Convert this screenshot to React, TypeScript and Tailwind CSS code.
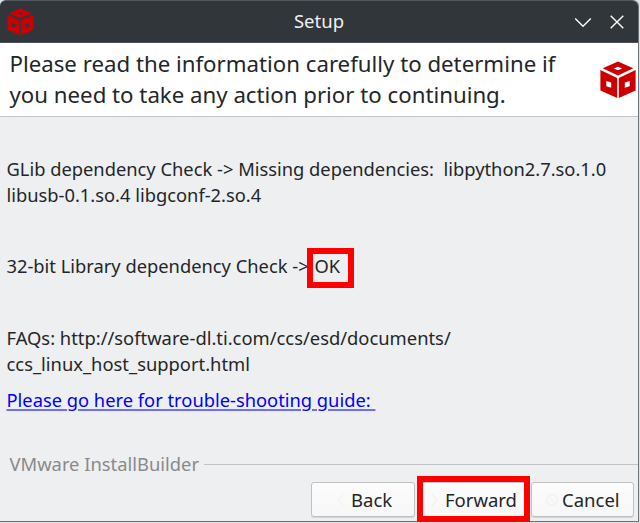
import type { ReactNode } from "react";

function CubeLogo({ className }: { className: string }) {
  return (
    <svg viewBox="0 0 36 38" className={className} fill="#cc0000" fillRule="evenodd">
      <path d="M18 0.5 33.3 7.2 18 14.4 2.7 7.2ZM18 5.7 13.8 7.5 18 9.3 22.2 7.5Z" />
      <path d="M0.4 9 17.2 17V37L0.4 29.6ZM6.3 20V25.2L11.2 26.8V21.6Z" />
      <path d="M35.6 9 18.8 17V37L35.6 29.6ZM29.7 20 24.8 21.6V26.8L29.7 25.2Z" />
    </svg>
  );
}

function TitleBar() {
  return (
    <header className="relative flex h-[43px] shrink-0 items-center justify-between rounded-t-[6px] border-t border-b border-t-[#51585f] border-b-[#4a5157] bg-[#31363b] pr-[14px] pl-[7px]">
      <CubeLogo className="h-[28px] w-[27px]" />
      <h1 className="absolute inset-x-0 top-[7px] text-center text-[18.5px] leading-[26px] text-[#eff0f1]">Setup</h1>
      <div className="flex items-center gap-[18px]">
        <svg viewBox="0 0 18 16" className="h-4 w-[18px]" fill="none" stroke="#fcfcfc" strokeWidth="1.4">
          <path d="M1.2 4.4 9 12.2 16.8 4.4" />
        </svg>
        <svg viewBox="0 0 14 14" className="size-[14px]" fill="none" stroke="#fcfcfc" strokeWidth="1.4">
          <path d="M.7.7 13.3 13.3M13.3.7.7 13.3" />
        </svg>
      </div>
    </header>
  );
}

function DialogButton({ label, icon, className }: { label: string; icon: ReactNode; className: string }) {
  return (
    <button
      className={`flex h-[35px] items-center rounded-[3px] border border-[#bfc1c2] bg-linear-to-b from-[#fcfcfc] to-[#f7f7f8] text-[18.5px] leading-[26px] shadow-[0_1px_0_#d2d3d4] ${className}`}
    >
      <svg viewBox="0 0 12 12" className="mr-[4px] size-3 shrink-0" fill="none" stroke="#eeeeef" strokeWidth="1">
        {icon}
      </svg>
      {label}
    </button>
  );
}

export default function App() {
  return (
    <div className="flex h-[523px] w-[640px] flex-col overflow-hidden bg-[#dfe1e2] font-['Noto_Sans',sans-serif] whitespace-nowrap text-[#232629]">
      <div className="flex h-[522px] w-[639px] flex-col rounded-t-[6px] border-r border-b border-[#6c7379] bg-[#eeeff1]">
        <TitleBar />
        <section className="flex h-[74px] shrink-0 items-center justify-between border-b border-[#c3c5c6] bg-white pl-[9.5px]">
          <p className="-mt-px text-[22.24px] leading-[31px]">
            Please read the information carefully to determine if
            <br />
            you need to take any action prior to continuing.
          </p>
          <CubeLogo className="mr-[2.5px] h-[38px] w-[36px]" />
        </section>
        <main className="flex grow flex-col pt-[39px] pl-[6.5px] text-[18.32px] leading-[25.5px]">
          <p>
            GLib dependency Check -&gt; Missing dependencies:&nbsp; libpython2.7.so.1.0
            <br />
            libusb-0.1.so.4 libgconf-2.so.4
          </p>
          <p className="mt-[46px]">
            32-bit Library dependency Check -&gt;{" "}
            <span className="relative ml-px">
              OK
              <span className="absolute top-[-5px] left-[-7px] h-[40px] w-[47px] border-6 border-[#ff0000]" />
            </span>
          </p>
          <p className="mt-[46.5px] text-[18.38px]">
            FAQs: http://software-dl.ti.com/ccs/esd/documents/
            <br />
            ccs_linux_host_support.html
          </p>
          <a className="mt-[10.5px] self-start text-[#0000ff] underline decoration-[#6f6ff5] decoration-2 underline-offset-2">
            Please go here for trouble-shooting guide:&nbsp;
          </a>
        </main>
        <div className="flex h-[26px] shrink-0 items-center gap-[5px] pl-[9.5px] text-[18.38px] leading-[26px] text-[#888a8c]">
          <span>VMware InstallBuilder</span>
          <span className="h-px grow bg-[#c1c3c5]" />
        </div>
        <footer className="flex h-[44px] shrink-0 items-start justify-end gap-[2px] pt-[5px] pr-[4px]">
          <DialogButton label="Back" className="w-[104px] pl-[23px]" icon={<path d="M8 0 3 6 8 12" />} />
          <div className="relative w-[112px]">
            <DialogButton label="Forward" className="w-[110px] pl-[11px]" icon={<path d="M3 0 8 6 3 12" />} />
            <span className="absolute top-[-6px] left-0 h-[46px] w-[113px] border-6 border-[#ff0000]" />
          </div>
          <DialogButton
            label="Cancel"
            className="w-[103px] pl-[14px]"
            icon={
              <>
                <circle cx="6" cy="6" r="5.5" />
                <path d="M2 2 10 10" />
              </>
            }
          />
        </footer>
      </div>
    </div>
  );
}
